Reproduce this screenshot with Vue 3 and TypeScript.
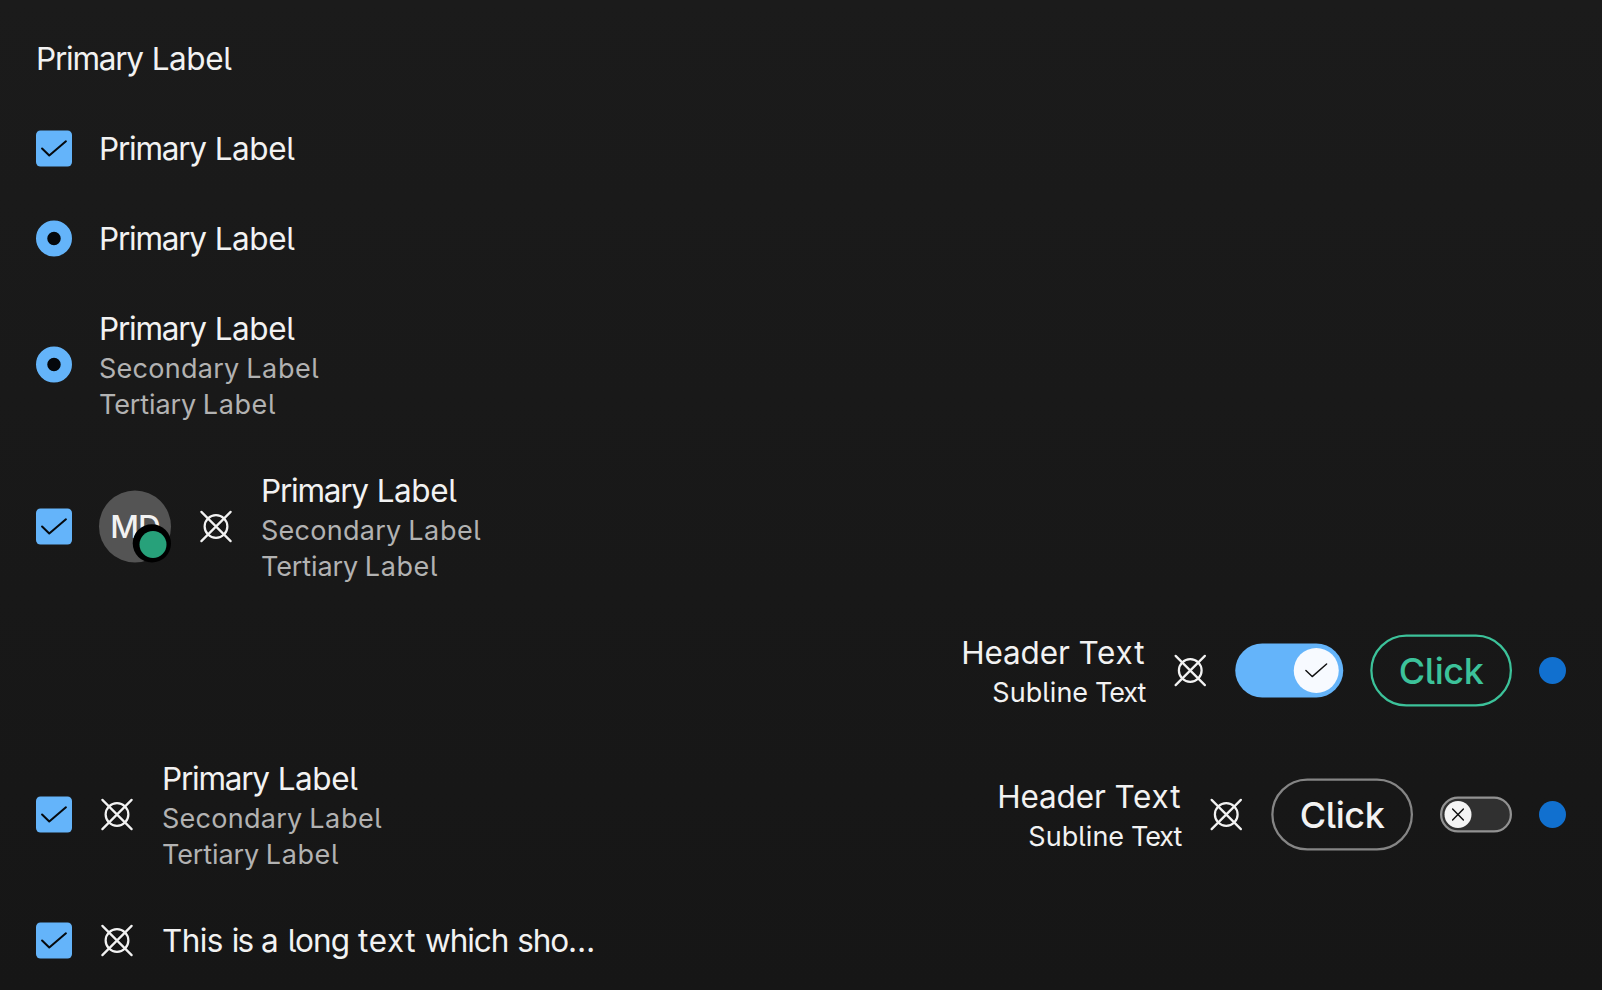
<script setup lang="ts">
interface Row {
  size: 'one' | 'two' | 'three'
  lead: string[]
  labels: string[]
  header?: string[]
  trail: string[]
}

const full = ['Primary Label', 'Secondary Label', 'Tertiary Label']
const header = ['Header Text', 'Subline Text']

const rows: Row[] = [
  { size: 'one', lead: [], labels: ['Primary Label'], trail: [] },
  { size: 'one', lead: ['checkbox'], labels: ['Primary Label'], trail: [] },
  { size: 'one', lead: ['radio'], labels: ['Primary Label'], trail: [] },
  { size: 'three', lead: ['radio'], labels: full, trail: [] },
  { size: 'three', lead: ['checkbox', 'avatar', 'icon'], labels: full, trail: [] },
  { size: 'two', lead: [], labels: [], header, trail: ['icon', 'toggle-on', 'button-green', 'dot'] },
  { size: 'three', lead: ['checkbox', 'icon'], labels: full, header, trail: ['icon', 'button', 'toggle-off', 'dot'] },
  { size: 'one', lead: ['checkbox', 'icon'], labels: ['This is a long text which sho…'], trail: [] },
]

// Tracking of each word in px, for the 14px and the 12px text styles
const tracking14: Record<string, number> = {
  Primary: -0.55, Label: -0.18, Header: -0.07, Text: 0.35,
  This: -0.27, is: -0.85, a: 0.1, long: -0.4, text: 0.25, which: -0.48, 'sho…': -0.5,
}
const tracking12: Record<string, number> = {
  Secondary: 0.12, Tertiary: -0.05, Label: 0.27, Subline: 0.02, Text: -0.47,
}

function words(text: string, tracking: Record<string, number>) {
  return text.split(' ').map((word) => ({ word, style: { letterSpacing: (tracking[word] ?? 0) + 'px' } }))
}
</script>

<template>
  <div class="viewport">
    <main class="list">
      <div v-for="(row, i) in rows" :key="i" class="row" :class="row.size">
        <div class="group">
          <template v-for="item in row.lead" :key="item">
            <span v-if="item === 'checkbox'" class="checkbox">
              <svg viewBox="0 0 16 16"><path d="M2.7 8 5.9 11.1 13.3 4.8" /></svg>
            </span>
            <span v-else-if="item === 'radio'" class="radio"></span>
            <span v-else-if="item === 'avatar'" class="avatar">MD<i class="presence"></i></span>
            <svg v-else class="icon" viewBox="0 0 16 16">
              <circle cx="8" cy="8" r="5.05" />
              <path d="M1.5 1.5 14.5 14.5M14.5 1.5 1.5 14.5" />
            </svg>
          </template>
          <div v-if="row.labels.length" class="labels">
            <div v-for="(label, n) in row.labels" :key="label" :class="n ? 'secondary' : 'primary'">
              <template v-for="(w, k) in words(label, n ? tracking12 : tracking14)" :key="k">{{ k ? ' ' : '' }}<span :style="w.style">{{ w.word }}</span></template>
            </div>
          </div>
        </div>
        <div class="group">
          <div v-if="row.header" class="labels end">
            <div v-for="(line, n) in row.header" :key="line" :class="n ? 'subline' : 'primary'">
              <template v-for="(w, k) in words(line, n ? tracking12 : tracking14)" :key="k">{{ k ? ' ' : '' }}<span :style="w.style">{{ w.word }}</span></template>
            </div>
          </div>
          <template v-for="item in row.trail" :key="item">
            <svg v-if="item === 'icon'" class="icon" viewBox="0 0 16 16">
              <circle cx="8" cy="8" r="5.05" />
              <path d="M1.5 1.5 14.5 14.5M14.5 1.5 1.5 14.5" />
            </svg>
            <span v-else-if="item === 'toggle-on'" class="toggle on">
              <span class="knob"><svg viewBox="0 0 20 20"><path d="M5.4 10 8.2 12.7 14.6 7.1" /></svg></span>
            </span>
            <span v-else-if="item === 'toggle-off'" class="toggle off">
              <span class="knob"><svg viewBox="0 0 12 12"><path d="M3.6 3.6 8.4 8.4M8.4 3.6 3.6 8.4" /></svg></span>
            </span>
            <span v-else-if="item === 'dot'" class="dot"></span>
            <button v-else class="button" :class="{ green: item === 'button-green' }">Click</button>
          </template>
        </div>
      </div>
    </main>
  </div>
</template>

<style>
body {
  margin: 0;
  background: #161616;
}
</style>

<style scoped>
.viewport {
  width: 1602px;
  height: 990px;
  overflow: hidden;
  background: linear-gradient(#1b1b1b, #161616);
}
.list {
  box-sizing: border-box;
  width: 712px;
  height: 440px;
  padding: 6px 16px 0;
  transform: scale(2.25);
  transform-origin: 0 0;
  font-family: Inter, sans-serif;
  font-feature-settings: 'cv05' 1;
  color: #f2f2f2;
}
.row {
  display: flex;
  justify-content: space-between;
  align-items: center;
}
.one { height: 40px; }
.two { height: 56px; }
.three { height: 72px; }
.group {
  display: flex;
  align-items: center;
  gap: 12px;
}
.labels { white-space: nowrap; }
.end { text-align: right; }
.primary {
  font-size: 14px;
  line-height: 20px;
}
.secondary,
.subline {
  font-size: 12px;
  line-height: 16px;
  word-spacing: -0.4px;
}
.secondary { color: #b2b2b2; }
svg {
  display: block;
  fill: none;
  stroke-linecap: round;
  stroke-linejoin: round;
}
.icon {
  width: 16px;
  height: 16px;
  stroke: #f2f2f2;
  stroke-width: 1;
}
.checkbox {
  width: 16px;
  height: 16px;
  border-radius: 2px;
  background: #64b4fa;
}
.checkbox svg {
  stroke: #060a0e;
  stroke-width: 0.9;
}
.radio {
  box-sizing: border-box;
  width: 16px;
  height: 16px;
  border: 5px solid #64b4fa;
  border-radius: 50%;
  background: #05080c;
}
.avatar {
  position: relative;
  width: 32px;
  height: 32px;
  border-radius: 50%;
  background: #545454;
  font-size: 14px;
  font-weight: 500;
  line-height: 32px;
  letter-spacing: -0.4px;
  text-align: center;
}
.presence {
  position: absolute;
  right: 0;
  bottom: 0;
  width: 17px;
  height: 17px;
  border-radius: 50%;
  background: #000;
}
.presence::after {
  content: '';
  position: absolute;
  top: 2.8px;
  left: 2.8px;
  width: 12.2px;
  height: 12.2px;
  border-radius: 50%;
  background: #27a17a;
}
.toggle {
  display: flex;
  align-items: center;
  box-sizing: border-box;
  border-radius: 12px;
}
.knob { border-radius: 50%; }
.on {
  width: 48px;
  height: 24px;
  padding: 2px;
  justify-content: flex-end;
  background: #64b4fa;
}
.on .knob {
  width: 20px;
  height: 20px;
  background: #f7faff;
}
.off {
  width: 32px;
  height: 16px;
  padding: 0 1px;
  border: 1px solid #929292;
  background: #303030;
}
.off .knob {
  width: 12px;
  height: 12px;
  background: #f4f4f4;
}
.knob svg {
  stroke: #111;
  stroke-width: 0.65;
}
.button {
  box-sizing: border-box;
  width: 63px;
  height: 32px;
  padding: 0;
  border: 1px solid #858585;
  border-radius: 16px;
  background: transparent;
  color: #f2f2f2;
  font: 500 16px/30px Inter, sans-serif;
  font-feature-settings: inherit;
  letter-spacing: -0.2px;
}
.green {
  border-color: #3cc29a;
  color: #3cc29a;
}
.dot {
  width: 12px;
  height: 12px;
  border-radius: 50%;
  background: #1170cf;
}
</style>
